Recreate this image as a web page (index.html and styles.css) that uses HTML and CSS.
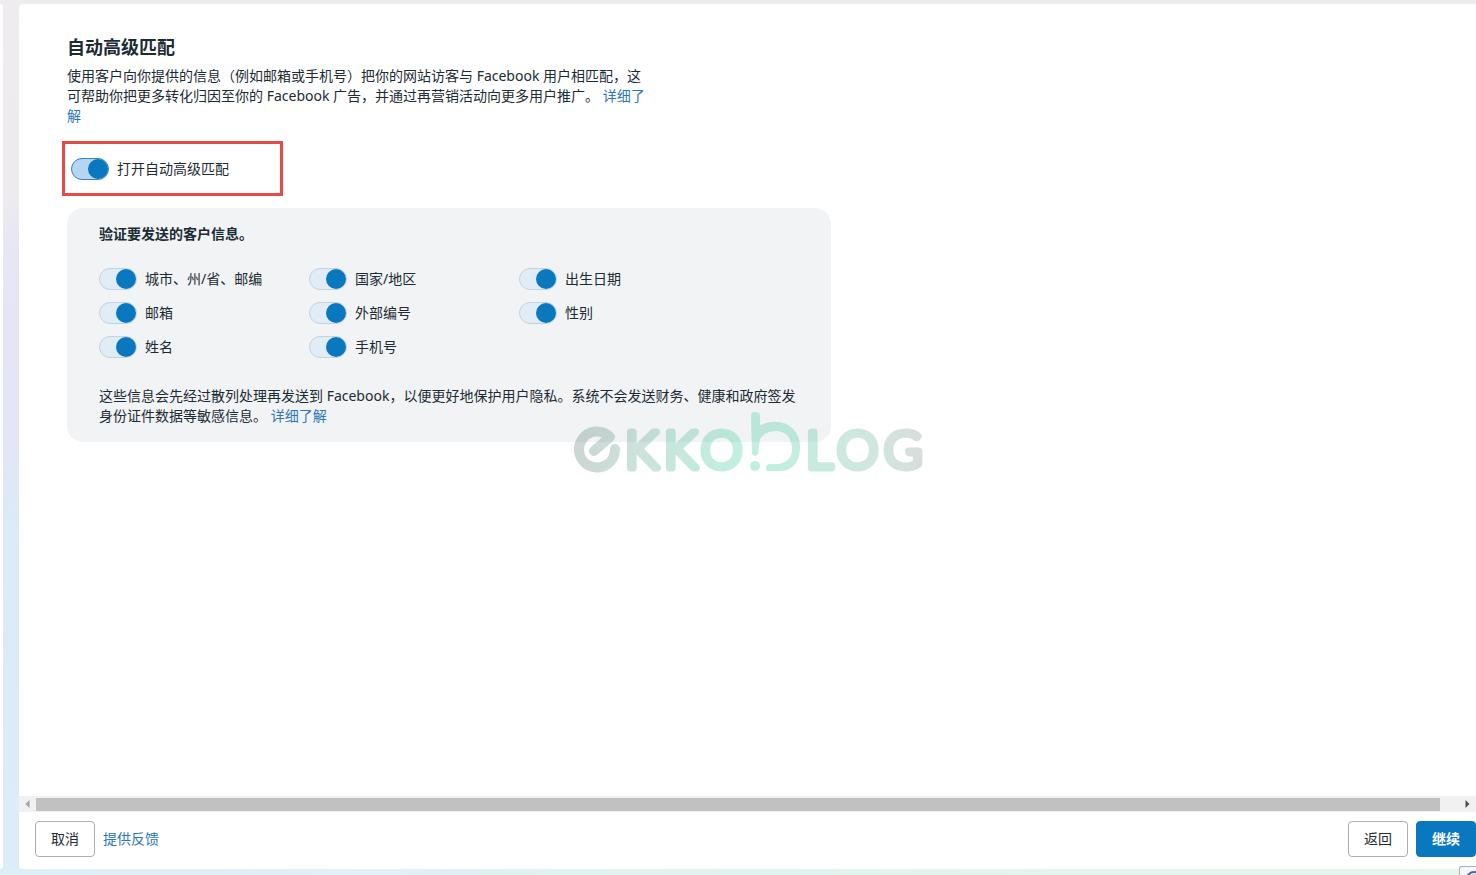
FILE: index.html
```html
<!DOCTYPE html>
<html lang="zh-CN">
<head>
<meta charset="utf-8">
<title>自动高级匹配</title>
<link rel="stylesheet" href="styles.css">
</head>
<body>
<div class="page">
  <aside class="side"></aside>
  <main class="dialog">
    <div class="content">
      <h1 class="title">自动高级匹配</h1>
      <p class="intro">使用客户向你提供的信息（例如邮箱或手机号）把你的网站访客与 Facebook 用户相匹配，这可帮助你把更多转化归因至你的 Facebook 广告，并通过再营销活动向更多用户推广。 <a class="link" href="#">详细了解</a></p>
      <div class="highlight">
        <label class="option"><input class="switch switch-strong" type="checkbox" checked>打开自动高级匹配</label>
      </div>
      <section class="panel">
        <h2 class="subtitle">验证要发送的客户信息。</h2>
        <div class="options">
          <label class="option"><input class="switch" type="checkbox" checked>城市、州/省、邮编</label>
          <label class="option"><input class="switch" type="checkbox" checked>国家/地区</label>
          <label class="option"><input class="switch" type="checkbox" checked>出生日期</label>
          <label class="option"><input class="switch" type="checkbox" checked>邮箱</label>
          <label class="option"><input class="switch" type="checkbox" checked>外部编号</label>
          <label class="option"><input class="switch" type="checkbox" checked>性别</label>
          <label class="option"><input class="switch" type="checkbox" checked>姓名</label>
          <label class="option"><input class="switch" type="checkbox" checked>手机号</label>
        </div>
        <p class="note">这些信息会先经过散列处理再发送到 Facebook，以便更好地保护用户隐私。系统不会发送财务、健康和政府签发身份证件数据等敏感信息。 <a class="link" href="#">详细了解</a></p>
        <svg class="watermark" width="360" height="72" viewBox="570 410 360 72" role="img" aria-label="ekko!bLOG">
          <defs>
            <linearGradient id="tint" gradientUnits="userSpaceOnUse" x1="573" y1="0" x2="928" y2="0">
              <stop offset="0" stop-color="#63807a"/>
              <stop offset="0.18" stop-color="#62a891"/>
              <stop offset="0.45" stop-color="#42cf9e"/>
              <stop offset="0.62" stop-color="#4acb9f"/>
              <stop offset="0.85" stop-color="#72b49d"/>
              <stop offset="1" stop-color="#8a9591"/>
            </linearGradient>
          </defs>
          <g opacity="0.32" stroke="url(#tint)" stroke-linecap="round" stroke-linejoin="round">
            <path d="M594 451 610 437A18 18 0 1 0 615 449" fill="none" stroke-width="10"/>
            <text class="wordmark" x="625 664 701" y="468" fill="url(#tint)" stroke-width="7">KKO</text>
            <path d="M751 415Q751 412 755 412T760 415V425Q781 417 793 429Q801 437 800 450Q798 471 779 471H769Q766 471 766 468T769 464H779Q793 461 792 447Q790 432 777 431Q765 431 760 439L758 454Q755 458 752 454Z" fill="url(#tint)" stroke="none"/>
            <circle cx="755" cy="466" r="5" fill="url(#tint)" stroke="none"/>
            <text class="wordmark" x="806 837 884" y="468" fill="url(#tint)" stroke-width="7">LOG</text>
          </g>
        </svg>
      </section>
    </div>
    <div class="scrollbar">
      <svg class="arrow" viewBox="0 0 16 16"><path d="M10 4v8L6 8z" fill="#a3a3a3"/></svg>
      <div class="thumb"></div>
      <svg class="arrow" viewBox="0 0 16 16"><path d="M6 4v8l4-4z" fill="#505050"/></svg>
    </div>
    <footer class="footer">
      <button class="button" type="button">取消</button>
      <a class="link" href="#">提供反馈</a>
      <span class="spacer"></span>
      <button class="button" type="button">返回</button>
      <button class="button button-primary" type="button">继续</button>
    </footer>
  </main>
  <div class="corner"><svg width="16" height="16" viewBox="0 0 16 16" fill="none" stroke="#5360a8" stroke-width="2"><circle cx="8" cy="12" r="7"/><path d="M3 12q5-7 10 0"/></svg></div>
</div>
</body>
</html>
```
FILE: styles.css
```css
* { box-sizing: border-box; }
body {
  margin: 0;
  font: 14px/20px "Noto Sans", "Noto Sans CJK SC", sans-serif;
  color: #1c2b33;
}
.page {
  position: relative;
  display: grid;
  grid-template-columns: 3px 1fr;
  gap: 16px;
  height: 100vh;
  padding: 4px 0 6px;
  overflow: hidden;
  background:
    linear-gradient(90deg, #dfeff8, #e3f3ee 60%, #e6f5ed) bottom / 100% 6px no-repeat,
    linear-gradient(#eeecee 0, #edebee 22%, #e6e6f5 30%, #e4e5f6 50%, #dbebf7 60%, #dbedf6 100%);
}
.side { background: #fff; border-radius: 0 4px 4px 0; }
.dialog {
  display: flex;
  flex-direction: column;
  min-width: 0;
  background: #fff;
  border-radius: 4px 0 0 4px;
}
.content { flex: 1; padding: 32px 48px 0; }
.title { margin: 0; font-size: 18px; line-height: 22px; font-weight: 700; }
.intro { max-width: 580px; margin: 8px 0 15px; }
.link { color: #2d76b8; text-decoration: none; }
.highlight {
  display: flex;
  align-items: center;
  width: 221px;
  height: 55px;
  margin: 0 0 12px -5px;
  padding-left: 6px;
  border: 3px solid #e34b4b;
}
.option { display: flex; align-items: center; gap: 8px; }
.switch {
  appearance: none;
  display: flex;
  justify-content: flex-end;
  width: 38px;
  height: 22px;
  margin: 0;
  border: 1px solid #c5d3df;
  border-radius: 11px;
  background: #e0edf6;
}
.switch::before {
  content: "";
  width: 20px;
  height: 20px;
  border-radius: 50%;
  background: #0a78be;
}
.switch:not(:checked) { justify-content: flex-start; }
.switch-strong { border-color: #3583bd; background: #b5d5f3; }
.panel {
  position: relative;
  max-width: 764px;
  padding: 16px 32px;
  border-radius: 16px;
  background: #f1f3f5;
}
.subtitle { margin: 0 0 24px; font-size: 14px; line-height: 20px; font-weight: 700; }
.options {
  display: grid;
  grid-template-columns: repeat(3, 210px);
  row-gap: 12px;
}
.note { margin: 28px 0 0; }
.watermark {
  position: absolute;
  top: 202px;
  left: 503px;
  overflow: visible;
  pointer-events: none;
}
.wordmark { font: 300 52px Lato, sans-serif; }
.scrollbar {
  display: flex;
  align-items: center;
  height: 16px;
  background: #f1f1f1;
}
.arrow { width: 17px; height: 16px; }
.thumb { flex: 1; height: 13px; margin-right: 19px; background: #c1c1c1; }
.footer {
  display: flex;
  align-items: center;
  gap: 8px;
  padding: 9px 0 12px 16px;
}
.spacer { flex: 1; }
.button {
  width: 60px;
  height: 36px;
  padding: 0;
  border: 1px solid #a9afb5;
  border-radius: 4px;
  background: #fff;
  color: #1c2b33;
  font: inherit;
}
.button-primary {
  border-color: #0a78be;
  background: #0a78be;
  color: #fff;
  font-weight: 700;
}
.corner {
  position: absolute;
  right: 0;
  bottom: 0;
  width: 17px;
  height: 9px;
  padding-left: 6px;
  overflow: hidden;
  border: 1px solid #aab3b8;
  border-width: 1px 0 0 1px;
  border-radius: 3px 0 0 0;
  background: #f7f8fb;
}
```
